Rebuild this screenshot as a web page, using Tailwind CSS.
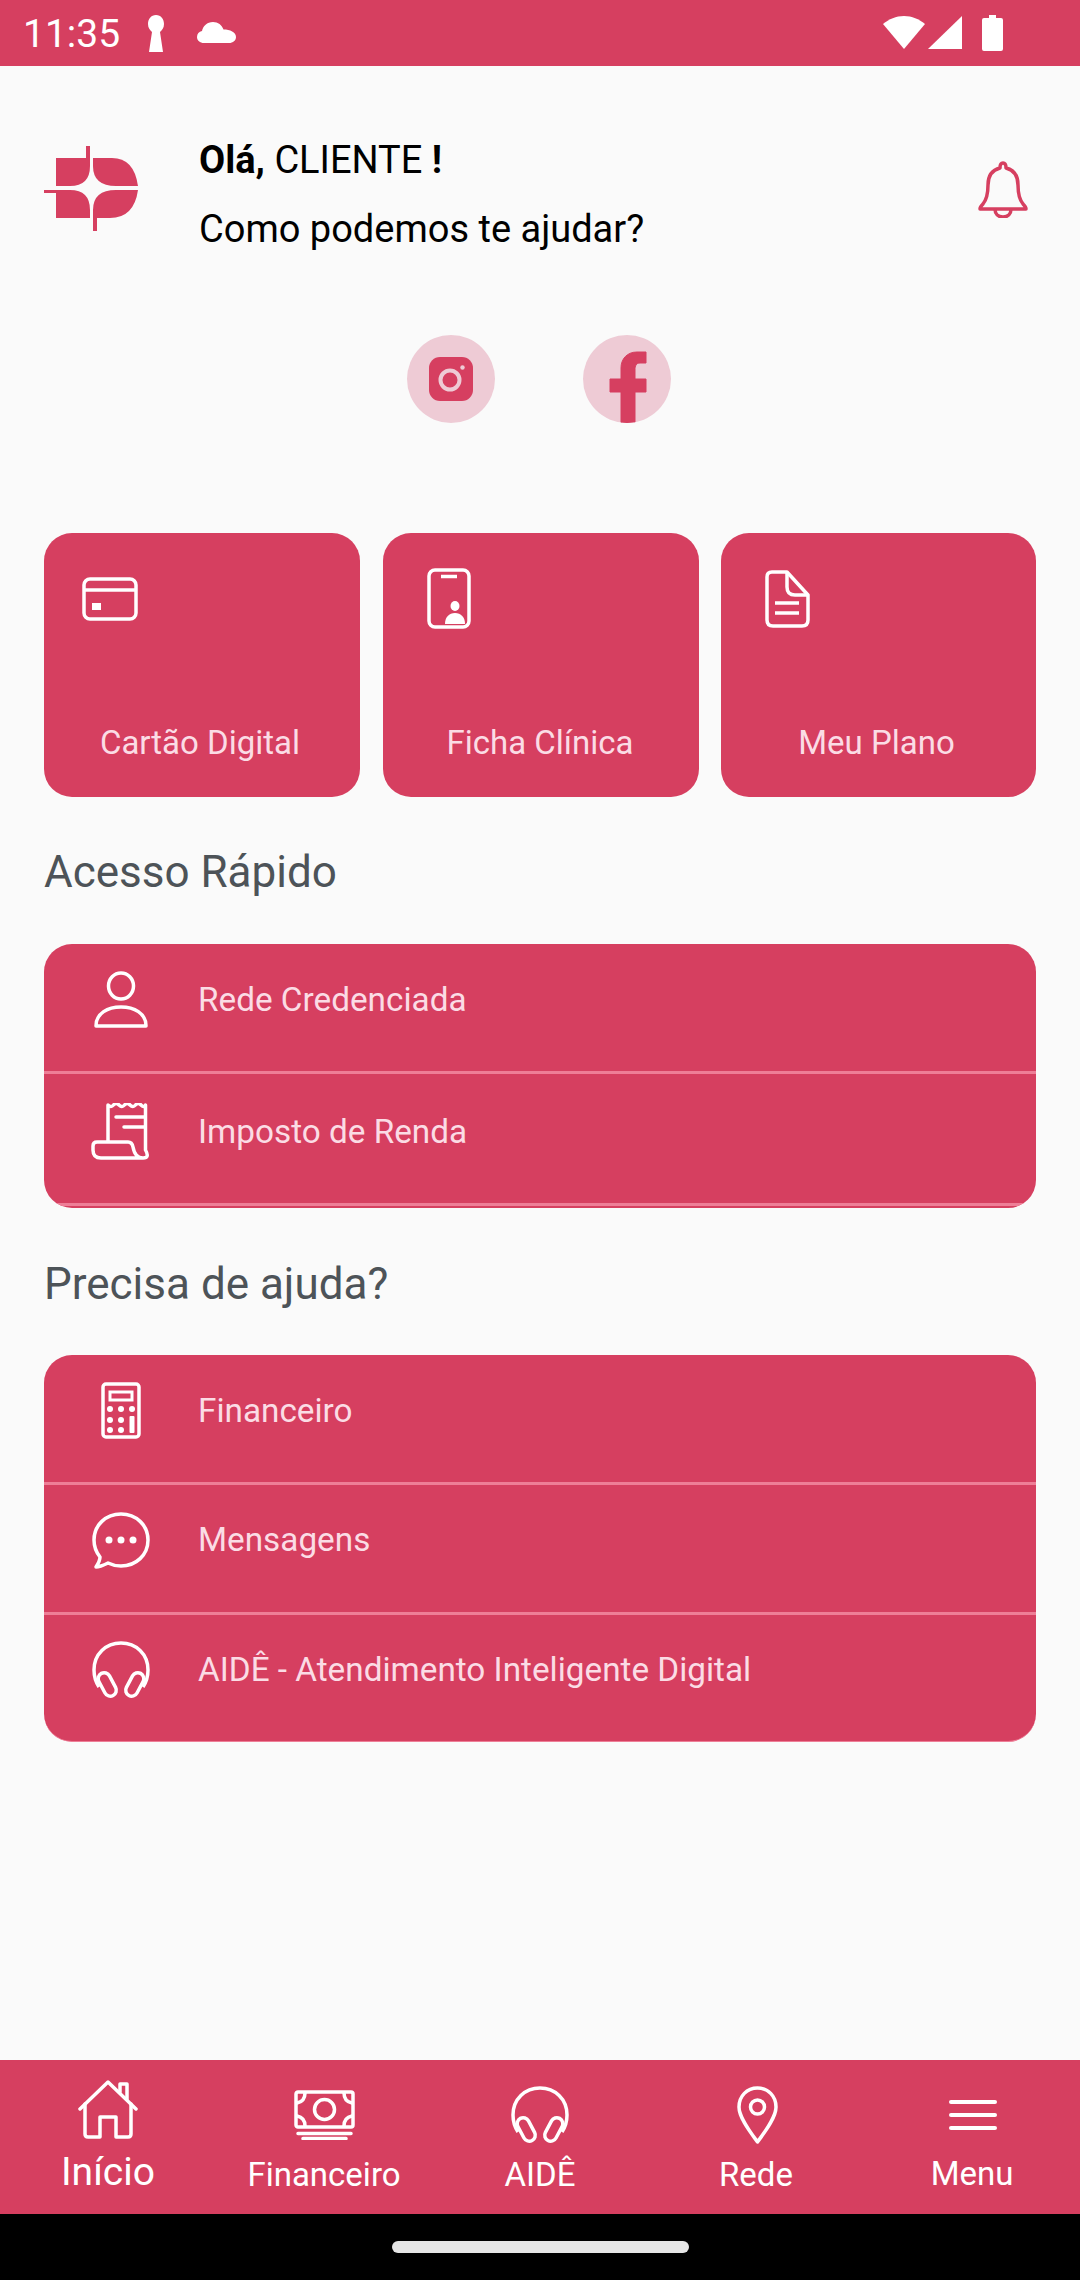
<!doctype html>
<html lang="pt"><head><meta charset="utf-8"><script src="https://cdn.jsdelivr.net/npm/@tailwindcss/browser@4"></script></head>
<body class="m-0">
<div class="w-[1080px] h-[2280px] flex flex-col bg-[#fafafa] overflow-hidden font-['Roboto',sans-serif]">
  <!-- status bar -->
  <div class="h-[66px] shrink-0 bg-[#d63f60] flex items-start text-white">
    <span class="ml-[23px] mt-[11px] text-[39px] leading-[46px] w-[122px]">11:35</span>
    <svg class="mt-[15px] w-[22px] h-[37px]" viewBox="0 0 22 37" fill="#fff"><path d="M11 0C6 0 3 4 3 9c0 4 2 6 4 8L4 37h14l-3-20c2-2 4-4 4-8 0-5-3-9-8-9z"/></svg>
    <svg class="mt-[22px] ml-[30px] w-[39px] h-[21px]" viewBox="0 0 39 21" fill="#fff"><path d="M7 21C3 21 0 18.500 0 15c0-3 2-5.500 5-6 1-5 5-9 11-9 5 0 9 3 10.500 7.500C33 7.500 39 10 39 15c0 3.500-3 6-7 6z"/></svg>
    <div class="flex-1"></div>
    <svg class="mt-[16px] w-[42px] h-[33px]" viewBox="0 0 42 33" fill="#fff"><path d="M21 33 0 8C6 3 13 0 21 0s15 3 21 8z"/></svg>
    <svg class="mt-[16px] ml-[3px] w-[34px] h-[33px]" viewBox="0 0 34 33" fill="#fff"><path d="M34 0v33H0z"/></svg>
    <svg class="mt-[15px] ml-[20px] mr-[77px] w-[21px] h-[36px]" viewBox="0 0 21 36" fill="#fff"><path d="M7 0h7v3h5q2 0 2 2v29q0 2-2 2H2q-2 0-2-2V5q0-2 2-2h5z"/></svg>
  </div>

  <!-- greeting -->
  <div class="h-[200px] shrink-0 flex items-start pl-[44px] text-black">
    <svg class="mt-[80px] w-[94px] h-[85px] shrink-0" viewBox="0 0 94 85" fill="#d63f60">
      <path d="M12 12H42V0H46V20Q46 40 26 40H12Z"/>
      <path d="M49 12H68Q90 12 94 40H72Q49 40 49 20Z"/>
      <path d="M0 44H26Q46 44 46 64V72H12V47H0Z"/>
      <path d="M72 44H94Q90 72 66 72H53V85H49V64Q49 44 72 44Z"/>
    </svg>
    <div class="ml-[61px] flex-1 pt-[72px]">
      <p class="text-[38px] leading-[44px]"><b class="font-bold">Olá,</b> CLIENTE <b class="font-bold">!</b></p>
      <p class="text-[38px] leading-[44px] mt-[25px]">Como podemos te ajudar?</p>
    </div>
    <svg class="mt-[95px] mr-[52px] w-[50px] h-[57px]" viewBox="0 0 50 57" fill="none" stroke="#d63f60" stroke-width="3.500" stroke-linejoin="round"><path d="M25 2c-2 0-3 2-3 5-8 2-12 8-12 17 0 7-1 14-5 19-2 2-3 3-3 5h46c0-2-1-3-3-5-4-5-5-12-5-19 0-9-4-15-12-17 0-3-1-5-3-5z"/><path d="M17 48c0 5 3 8 8 8s8-3 8-8"/></svg>
  </div>

  <!-- social -->
  <div class="h-[88px] mt-[69px] shrink-0 flex pl-[407px] gap-[88px]">
    <div class="w-[88px] h-[88px] rounded-full bg-[#eecbd5] flex items-center justify-center">
      <svg class="w-[44px] h-[44px]" viewBox="0 0 44 44"><rect width="44" height="44" rx="11" fill="#d63f60"/><circle cx="21" cy="23" r="9.500" fill="none" stroke="#eecbd5" stroke-width="4"/><circle cx="33.500" cy="10.500" r="2.200" fill="#eecbd5"/></svg>
    </div>
    <div class="w-[88px] h-[88px] rounded-full bg-[#eecbd5] overflow-hidden">
      <svg class="w-[88px] h-[88px]" viewBox="0 0 88 88" fill="#d63f60"><path d="M38 88V57H27V44H38V33C38 24 44 17 54 17H63V28H57C53 28 52 31 52 35V44H63V57H52V88Z" stroke="#d63f60" stroke-linejoin="round" stroke-width="1"/></svg>
    </div>
  </div>

  <!-- cards -->
  <div class="mt-[110px] shrink-0 flex px-[44px]">
    <div class="w-[316px] h-[264px] rounded-[28px] bg-[#d63f60] flex flex-col">
      <div class="h-[190px] pl-[38px] pt-[44px]">
        <svg class="w-[56px] h-[44px]" viewBox="0 0 56 44" fill="none" stroke="#fff" stroke-width="3.500"><rect x="2" y="2" width="52" height="40" rx="6"/><path d="M2 13H54"/><rect x="10" y="26" width="9" height="7" fill="#fff" stroke="none"/></svg>
      </div>
      <p class="text-center text-[33px] leading-[40px] text-[#fbdce5] pr-[4px]">Cartão Digital</p>
    </div>
    <div class="ml-[23px] w-[316px] h-[264px] rounded-[28px] bg-[#d63f60] flex flex-col">
      <div class="h-[190px] pl-[44px] pt-[35px]">
        <svg class="w-[44px] h-[61px]" viewBox="0 0 44 61" fill="none" stroke="#fff" stroke-width="3.500"><rect x="2" y="2" width="40" height="57" rx="6"/><path d="M14 8.500H30"/><ellipse cx="28" cy="38" rx="4.500" ry="5" fill="#fff" stroke="none"/><path d="M18 56C18 49 22 45 28 45C34 45 38 49 38 56Z" fill="#fff" stroke="none"/></svg>
      </div>
      <p class="text-center text-[33px] leading-[40px] text-[#fbdce5] pr-[2px]">Ficha Clínica</p>
    </div>
    <div class="ml-[22px] w-[315px] h-[264px] rounded-[28px] bg-[#d63f60] flex flex-col">
      <div class="h-[190px] pl-[44px] pt-[37px]">
        <svg class="w-[45px] h-[58px]" viewBox="0 0 45 58" fill="none" stroke="#fff" stroke-width="3.500" stroke-linejoin="round"><path d="M7 2H22L43 25V50Q43 56 37 56H8Q2 56 2 50V7Q2 2 7 2Z"/><path d="M22 3V17Q22 25 30 25H43"/><path d="M10 33H34M10 43H34"/></svg>
      </div>
      <p class="text-center text-[33px] leading-[40px] text-[#fbdce5] pr-[4px]">Meu Plano</p>
    </div>
  </div>

  <h2 class="mt-[50px] ml-[44px] text-[44px] leading-[50px] font-normal text-[#4d5358]">Acesso Rápido</h2>

  <!-- list 1 -->
  <div class="mt-[47px] mx-[44px] h-[264px] shrink-0 rounded-[28px] bg-[#d63f60] overflow-hidden text-[#fbdce5]">
    <div class="h-[130px] border-b-[3px] border-[#ee7e97] flex items-start">
      <div class="w-[154px] pt-[27px] flex justify-center"><svg class="w-[54px] h-[57px]" viewBox="0 0 54 57" fill="none" stroke="#fff" stroke-width="3.500" stroke-linejoin="round"><ellipse cx="27" cy="15" rx="12.500" ry="13"/><path d="M2 55C2 42 14 36 27 36C40 36 52 42 52 55Z"/></svg></div>
      <p class="text-[33.300px] leading-[40px] pt-[36px]">Rede Credenciada</p>
    </div>
    <div class="h-[132px] border-b-[3px] border-[#ee7e97] flex items-start">
      <div class="w-[154px] pt-[29px] flex justify-center"><svg class="w-[61px] h-[57px]" viewBox="0 0 61 57" fill="none" stroke="#fff" stroke-width="3.500" stroke-linejoin="round" stroke-linecap="round"><path d="M17 39V2q3 3 5.500 0t5.500 0 5.500 0 5.500 0 5.500 0 5.500 0 4.500 0V47Q59 55 52 55 44 55 42 44 41 39 37 39H6Q2 39 2 43V47Q2 55 10 55H52"/><path d="M25 14H53M33 24H53"/></svg></div>
      <p class="text-[33.300px] leading-[40px] pt-[38px]">Imposto de Renda</p>
    </div>
  </div>

  <h2 class="mt-[51px] ml-[44px] text-[44px] leading-[50px] font-normal text-[#4d5358]">Precisa de ajuda?</h2>

  <!-- list 2 -->
  <div class="mt-[46px] mx-[44px] h-[387px] shrink-0 rounded-[28px] bg-[#d63f60] overflow-hidden text-[#fbdce5] border-b-[1px] border-[#ee7e97]">
    <div class="h-[130px] border-b-[3px] border-[#ee7e97] flex items-start">
      <div class="w-[154px] pt-[27px] flex justify-center"><svg class="w-[40px] h-[57px]" viewBox="0 0 40 57" fill="#fff"><rect x="2" y="2" width="36" height="53" rx="3" fill="none" stroke="#fff" stroke-width="3.500"/><rect x="9" y="10" width="22" height="8" fill="none" stroke="#fff" stroke-width="3"/><circle cx="9" cy="27" r="3"/><circle cx="20" cy="27" r="3"/><circle cx="31" cy="27" r="3"/><circle cx="9" cy="38" r="3"/><circle cx="20" cy="38" r="3"/><circle cx="9" cy="48" r="3"/><circle cx="20" cy="48" r="3"/><rect x="28.500" y="34" width="5" height="17" rx="1"/></svg></div>
      <p class="text-[33.300px] leading-[40px] pt-[36px]">Financeiro</p>
    </div>
    <div class="h-[130px] border-b-[3px] border-[#ee7e97] flex items-start">
      <div class="w-[154px] pt-[27px] flex justify-center"><svg class="w-[58px] h-[57px]" viewBox="0 0 58 57" fill="none" stroke="#fff" stroke-width="3.500" stroke-linejoin="round"><path d="M8 45C4 40 2 35 2 28C2 13 14 2 29 2C44 2 56 13 56 28C56 43 44 54 29 54C24 54 20 53 16 51C12 53 8 55 4 55C6 52 8 49 8 45Z"/><circle cx="17" cy="28" r="3.500" fill="#fff" stroke="none"/><circle cx="29" cy="28" r="3.500" fill="#fff" stroke="none"/><circle cx="41" cy="28" r="3.500" fill="#fff" stroke="none"/></svg></div>
      <p class="text-[33.300px] leading-[40px] pt-[35px]">Mensagens</p>
    </div>
    <div class="flex items-start">
      <div class="w-[154px] pt-[26px] flex justify-center"><svg class="w-[58px] h-[58px]" viewBox="0 0 58 58" fill="none" stroke="#fff" stroke-width="3.500"><path d="M7 46C3 40 2 34 2 29C2 13 14 2 29 2C44 2 56 13 56 29C56 34 55 40 51 46"/><rect x="-6" y="-12" width="12" height="25" rx="6" transform="translate(15 43) rotate(-28)"/><rect x="-6" y="-12" width="12" height="25" rx="6" transform="translate(43 43) rotate(28)"/></svg></div>
      <p class="text-[33.300px] leading-[40px] pt-[35px]">AIDÊ - Atendimento Inteligente Digital</p>
    </div>
  </div>

  <div class="flex-1"></div>

  <!-- bottom nav -->
  <div class="h-[154px] shrink-0 bg-[#d63f60] grid grid-cols-5 text-white">
    <div class="flex flex-col items-center pt-[20px]">
      <svg class="w-[60px] h-[59px]" viewBox="0 0 60 59" fill="none" stroke="#fff" stroke-width="3.500" stroke-linecap="round" stroke-linejoin="round"><path d="M2 29L30 2L58 29"/><path d="M7 24V54Q7 57 10 57H22V37H38V57H50Q53 57 53 54V24"/><path d="M42 12V4H49V19"/></svg>
      <p class="text-[39px] leading-[46px] mt-[10px]">Início</p>
    </div>
    <div class="flex flex-col items-center pt-[30px]">
      <svg class="w-[61px] h-[50px]" viewBox="0 0 61 50" fill="none" stroke="#fff" stroke-width="3.500" stroke-linecap="round" stroke-linejoin="round"><rect x="2" y="2" width="57" height="35" rx="2"/><circle cx="30.500" cy="19.500" r="10"/><path d="M3 13C8 12 11 9 11 3M58 13C53 12 50 9 50 3M3 26C8 27 11 30 11 36M58 26C53 27 50 30 50 36"/><path d="M4 43.500H57M9 48.500H52"/></svg>
      <p class="text-[33px] leading-[40px] mt-[15px]">Financeiro</p>
    </div>
    <div class="flex flex-col items-center pt-[26px]">
      <svg class="w-[58px] h-[58px]" viewBox="0 0 58 58" fill="none" stroke="#fff" stroke-width="3.500"><path d="M7 46C3 40 2 34 2 29C2 13 14 2 29 2C44 2 56 13 56 29C56 34 55 40 51 46"/><rect x="-6" y="-12" width="12" height="25" rx="6" transform="translate(15 43) rotate(-28)"/><rect x="-6" y="-12" width="12" height="25" rx="6" transform="translate(43 43) rotate(28)"/></svg>
      <p class="text-[33px] leading-[40px] mt-[11px]">AIDÊ</p>
    </div>
    <div class="flex flex-col items-center pt-[26px]">
      <svg class="ml-[2px] w-[41px] h-[58px]" viewBox="0 0 41 58" fill="none" stroke="#fff" stroke-width="3.500" stroke-linejoin="round"><path d="M20.500 2C10 2 2 10 2 21C2 32 14 47 20.500 56C27 47 39 32 39 21C39 10 31 2 20.500 2Z"/><circle cx="20.500" cy="21" r="7"/></svg>
      <p class="text-[33px] leading-[40px] mt-[11px]">Rede</p>
    </div>
    <div class="flex flex-col items-center pt-[40px]">
      <div class="ml-[2px] w-[48px] flex flex-col gap-[9px]"><div class="h-[4px] rounded-full bg-white"></div><div class="h-[4px] rounded-full bg-white"></div><div class="h-[4px] rounded-full bg-white"></div></div>
      <p class="text-[33px] leading-[40px] mt-[24px]">Menu</p>
    </div>
  </div>
  <div class="h-[66px] shrink-0 bg-black flex justify-center pt-[27px]"><div class="w-[297px] h-[12px] rounded-full bg-[#e6e6e6]"></div></div>
</div>
</body></html>
